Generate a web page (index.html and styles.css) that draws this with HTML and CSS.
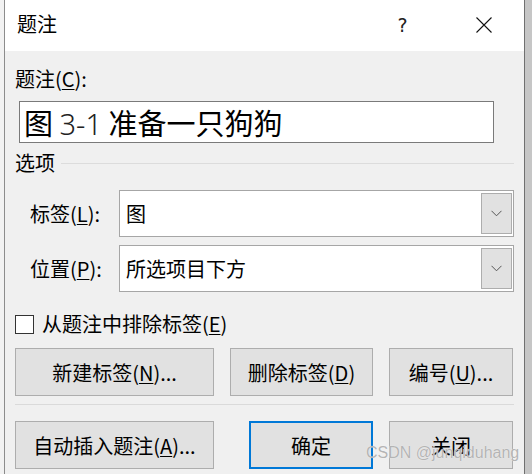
FILE: index.html
```html
<!DOCTYPE html>
<html lang="zh-CN">
<head>
  <meta charset="UTF-8">
  <meta name="viewport" content="width=device-width, initial-scale=1.0">
  <title>题注</title>
  <link rel="stylesheet" href="styles.css">
</head>
<body>
  <div class="window">
    <div class="titlebar">
      <span class="title">题注</span>
      <span class="help">?</span>
      <span class="close">
        <svg width="16" height="16" viewBox="0 0 16 16"><path d="M0.5 0.5 L15.5 15.5 M15.5 0.5 L0.5 15.5" stroke="#111" stroke-width="1.1" fill="none"/></svg>
      </span>
    </div>

    <div class="content">
      <div class="field-label">题注(<u>C</u>):</div>
      <div class="caption-input">图 <span class="num">3-1</span> 准备一只狗狗</div>

      <div class="group-title"><span>选项</span><span class="rule"></span></div>

      <div class="option-row">
        <span class="option-label">标签(<u>L</u>):</span>
        <div class="combo">
          <span class="combo-value">图</span>
          <span class="combo-btn">
            <svg width="11" height="7" viewBox="0 0 11 7"><path d="M0.5 0.8 L5.5 5.8 L10.5 0.8" stroke="#555" stroke-width="1" fill="none"/></svg>
          </span>
        </div>
      </div>
      <div class="option-row">
        <span class="option-label">位置(<u>P</u>):</span>
        <div class="combo">
          <span class="combo-value">所选项目下方</span>
          <span class="combo-btn">
            <svg width="11" height="7" viewBox="0 0 11 7"><path d="M0.5 0.8 L5.5 5.8 L10.5 0.8" stroke="#555" stroke-width="1" fill="none"/></svg>
          </span>
        </div>
      </div>

      <div class="check-row">
        <span class="checkbox"></span>
        <span>从题注中排除标签(<u>E</u>)</span>
      </div>

      <div class="btn-row">
        <button class="btn btn-wide">新建标签(<u>N</u>)...</button>
        <button class="btn btn-mid">删除标签(<u>D</u>)</button>
        <button class="btn btn-small">编号(<u>U</u>)...</button>
      </div>

      <div class="separator"></div>

      <div class="btn-row">
        <button class="btn btn-wide">自动插入题注(<u>A</u>)...</button>
        <button class="btn btn-small btn-default">确定</button>
        <button class="btn btn-small">关闭</button>
      </div>
    </div>
  </div>

  <div class="watermark">CSDN @junqiduhang</div>
</body>
</html>
```

FILE: styles.css
```css
html, body {
  margin: 0; padding: 0;
  width: 532px; height: 474px;
  overflow: hidden;
  background: #f2f2f2;
  font-family: "Noto Sans CJK SC", "Noto Sans", sans-serif;
  color: #000;
}
.window {
  margin-left: 4px;
  width: 519px;
  height: 474px;
  border-left: 1px solid #8c8c8c;
  border-right: 1px solid #707070;
  background: #f0f0f0;
  box-shadow: 7px 0 0 #c6c6c6;
}
.titlebar {
  height: 51px;
  background: #fff;
  display: flex;
  align-items: center;
}
.title {
  padding-left: 12px;
  font-size: 20px;
  line-height: 24px;
  margin-top: -3px;
}
.help {
  margin-left: auto;
  width: 81px;
  text-align: center;
  font-family: "DejaVu Sans", sans-serif;
  font-size: 19px;
  color: #222;
  line-height: 24px;
  margin-top: -2px;
}
.close {
  width: 81px;
  display: flex;
  justify-content: center;
  margin-top: -2px;
}
.content {
  padding: 0 10px;
  font-size: 20px;
}
u {
  text-decoration-thickness: 1px;
  text-underline-offset: 2px;
}
.field-label {
  margin-top: 16px;
  line-height: 24px;
}
.caption-input {
  margin: 10px 20px 0 4px;
  height: 40px;
  border: 1px solid #7a7a7a;
  background: #fff;
  padding-left: 4px;
  font-size: 29px;
  line-height: 40px;
  white-space: nowrap;
}
.caption-input .num {
  font-family: "Noto Sans", sans-serif;
  font-weight: 300;
  color: #222;
}
.group-title {
  margin-top: 8px;
  display: flex;
  align-items: center;
  line-height: 24px;
  gap: 6px;
}
.group-title .rule {
  flex: 1;
  height: 1px;
  background: #dcdcdc;
  margin-top: 1px;
}
.option-row {
  display: flex;
  align-items: center;
  padding-left: 15px;
  margin-top: 15px;
}
.option-row + .option-row {
  margin-top: 8px;
}
.option-label {
  width: 89px;
  line-height: 24px;
}
.combo {
  flex: 1;
  height: 43px;
  border: 1px solid #a6a6a6;
  background: #fff;
  display: flex;
  align-items: center;
  padding: 1px;
}
.combo-value {
  flex: 1;
  padding-left: 5px;
  line-height: 24px;
}
.combo-btn {
  width: 29px;
  height: 39px;
  border: 1px solid #adadad;
  background: #e1e1e1;
  display: flex;
  align-items: center;
  justify-content: center;
}
.check-row {
  margin-top: 20px;
  display: flex;
  align-items: center;
  line-height: 24px;
  gap: 8px;
}
.checkbox {
  width: 17px;
  height: 17px;
  border: 1px solid #333;
  background: #fff;
}
.btn-row {
  display: flex;
  gap: 16px;
  margin-top: 12px;
  padding-right: 1px;
}
.btn {
  height: 48px;
  border: 1px solid #adadad;
  background: #e1e1e1;
  font-family: inherit;
  font-size: 20px;
  color: #000;
  padding: 0;
}
.btn-wide { width: 199px; }
.btn-mid { width: 143px; }
.btn-small { width: 124px; }
.btn-default {
  margin-left: auto;
  border: 2px solid #0078d7;
}
.separator {
  margin-top: 8px;
  height: 1px;
  background: #dadada;
}
.separator + .btn-row {
  margin-top: 16px;
}
.watermark {
  position: absolute;
  left: 366px;
  top: 444px;
  font-family: "Liberation Sans", sans-serif;
  font-size: 16px;
  color: #b4b4b4;
  text-shadow: 0 0 1px rgba(255,255,255,0.9);
}
```
